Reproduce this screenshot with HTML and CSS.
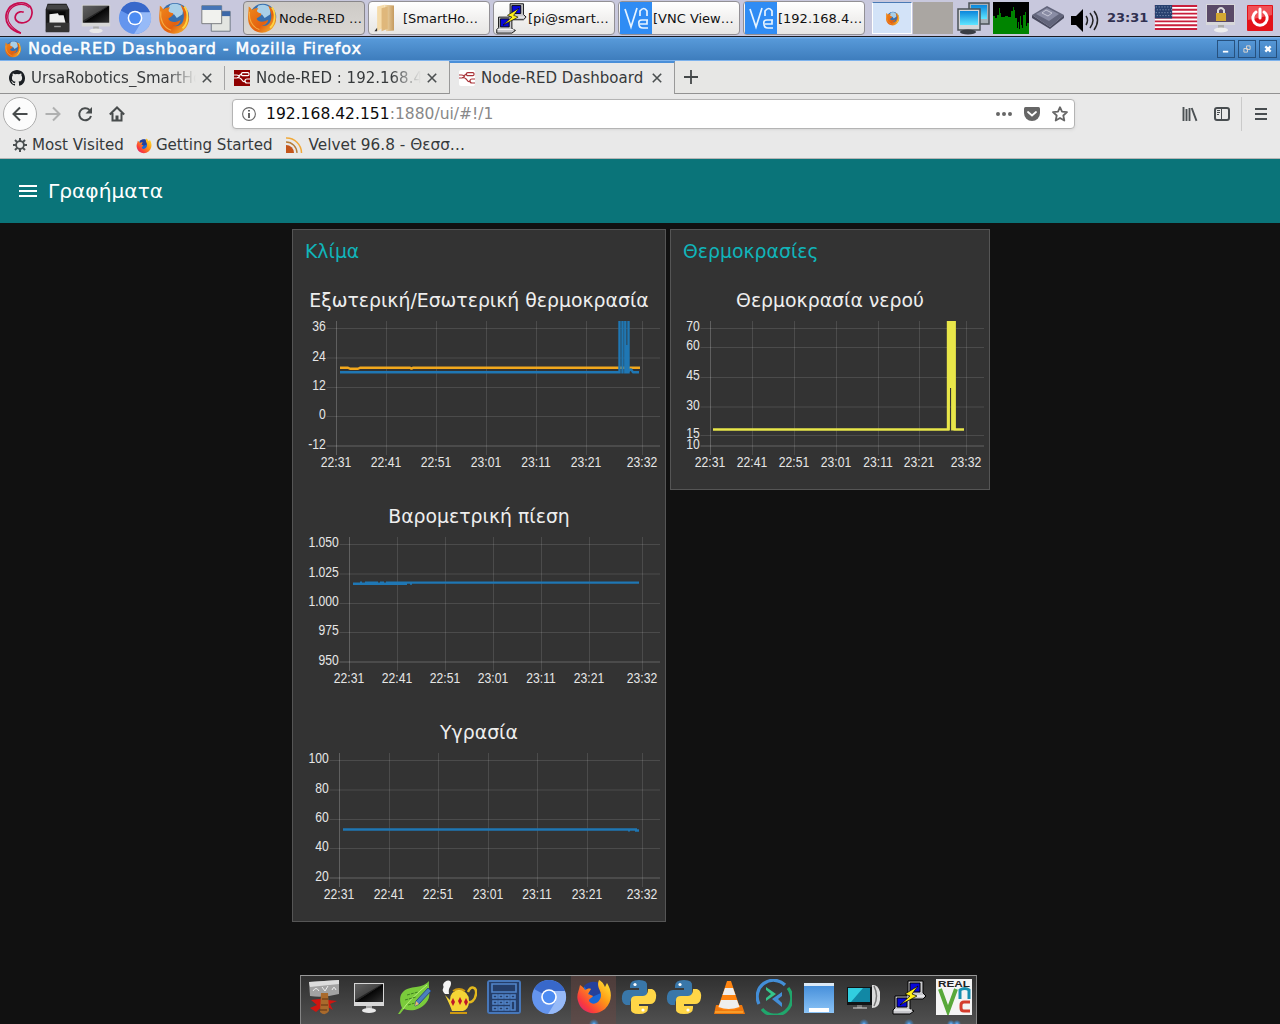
FILE: index.html
```html
<!DOCTYPE html>
<html lang="el">
<head>
<meta charset="utf-8">
<title>Node-RED Dashboard</title>
<link rel="stylesheet" href="styles.css">
</head>
<body>
<svg class="defs" width="0" height="0">
  <defs>
    <linearGradient id="fox" x1="0" y1="0" x2="1" y2="1"><stop offset="0" stop-color="#f08a1c"/><stop offset=".6" stop-color="#e3600f"/><stop offset="1" stop-color="#f8c838"/></linearGradient>
    <linearGradient id="quantum" x1="1" y1="0" x2="0" y2="1"><stop offset="0" stop-color="#fff03a"/><stop offset=".4" stop-color="#ff9a16"/><stop offset=".75" stop-color="#fa3c3c"/><stop offset="1" stop-color="#d0188a"/></linearGradient>
    <linearGradient id="screen" x1="0" y1="0" x2="1" y2="1"><stop offset="0" stop-color="#555"/><stop offset=".5" stop-color="#222"/><stop offset=".52" stop-color="#050505"/><stop offset="1" stop-color="#333"/></linearGradient>
    <linearGradient id="cyan" x1="0" y1="0" x2="0" y2="1"><stop offset="0" stop-color="#0a86dc"/><stop offset="1" stop-color="#5fe6ff"/></linearGradient>
    <linearGradient id="wood" x1="0" y1="0" x2="1" y2="0"><stop offset="0" stop-color="#f5dfb4"/><stop offset="1" stop-color="#c59a5e"/></linearGradient>
    <linearGradient id="window" x1="0" y1="0" x2="0" y2="1"><stop offset="0" stop-color="#3f8ad8"/><stop offset="1" stop-color="#8cc4f6"/></linearGradient>
  </defs>
  <symbol id="i-debian" viewBox="0 0 36 36"><path d="M20 34C8 31 2 22 5 12C9 1 24-1 30 6C34 12 31 22 23 23C16 24 12 19 15 14C17 11 21 11 23 12" fill="none" stroke="#c70a4e" stroke-width="1.800"/><path d="M20 34C9 28 4 20 7 12C11 3 23 1 29 7" fill="none" stroke="#c70a4e" stroke-width="1.400"/></symbol>
  <symbol id="i-cabinet" viewBox="0 0 36 36"><path d="M8 3h20l3 6v23H6V9z" fill="#1b1b1b"/><path d="M8 4h20l2 5H7z" fill="#444"/><path d="M9 11h18v11H9z" fill="#090909"/><path d="M10 14l9-1 1 2h5l2 8H10z" fill="#eee"/><path d="M7 23h24v10H6z" fill="#333"/><path d="M15 27h7" stroke="#999" stroke-width="1.5"/></symbol>
  <symbol id="i-monitor" viewBox="0 0 36 36"><path d="M3 4h30v23H3z" fill="#d7d7d7"/><path d="M4 5h28v18H4z" fill="url(#screen)"/><path d="M4 5h27L4 21z" fill="#777" opacity=".4"/><path d="M15 27h6v4h-6z" fill="#aaa"/><ellipse cx="18" cy="31.5" rx="7" ry="2.5" fill="#e9e9e9"/></symbol>
  <symbol id="i-chromium" viewBox="0 0 36 36"><circle cx="18" cy="18" r="17" fill="#6495ee"/><path d="M18 18L3 10A17 17 0 0 1 34 12z" fill="#3868ca"/><path d="M34 12A17 17 0 0 1 17 35l8-13-7-10z" fill="#96baf8"/><circle cx="18" cy="18" r="7.8" fill="#fff"/><circle cx="18" cy="18" r="6.2" fill="#4c8bf2"/></symbol>
  <symbol id="i-firefox" viewBox="0 0 36 36"><circle cx="19" cy="17" r="15" fill="#376fae"/><path d="M14 4c5-2 10-1 14 3l-1 7-6 4-3-4-6 2-3-4z" fill="#a8cfe8"/><path d="M3 5c2 1 3 3 4 4 2-2 4-2 7-2-3 3-2 5 3 6 1 3-4 4-5 6 2 4 8 4 13 1-1 6-7 7-9 6 9 3 14-4 12-14l-3-8c8 5 11 15 7 22C26 38 9 37 4 26 1 19 3 13 3 5z" fill="url(#fox)"/><path d="M29 6c5 6 4 18-2 23" fill="none" stroke="#ffd341" stroke-width="2"/><path d="M4 11c-1 8 2 17 11 20" fill="none" stroke="#f7ac42" stroke-width="1.2"/></symbol>
  <symbol id="i-quantum" viewBox="0 0 36 36"><circle cx="18" cy="18" r="14" fill="#1868d8"/><path d="M8 7c6-6 14-5 19 0l-2 7-9 4z" fill="#24409b"/><path d="M4 6c2 1 4 3 5 5 2-1 4-2 6-1l-3 5 5 2c-1 2-4 2-4 5 4 6 12 1 12-6 0-5-5-8-2-15 4 2 5 5 6 7l2-4c5 8 6 18-2 26-10 8-24 4-27-8C0 16 3 12 4 6z" fill="url(#quantum)"/></symbol>
  <symbol id="i-windows" viewBox="0 0 36 36"><path d="M13 11h20v21H13z" fill="#e3e5e1" stroke="#6d7784"/><path d="M13 11h20v5H13z" fill="#3c68a8"/><path d="M3 5h21v19H3z" fill="#f1f2ee" stroke="#77797c"/><path d="M3 5h21v4.500H3z" fill="#4675b5"/></symbol>
  <symbol id="i-folder" viewBox="0 0 36 36"><path d="M8 5l8-2v25l-8 5z" fill="#f5dbaa"/><path d="M16 3l11 1v28l-9 1z" fill="url(#wood)"/><path d="M13 7l7-2v25l-7 3z" fill="#dfb77b"/><path d="M5 33l3-4v4z" fill="#333"/></symbol>
  <symbol id="i-putty" viewBox="0 0 36 36"><path d="M17 2h15v12l3 3-3 3H17l-2-2 2-3z" fill="#c8c8cc" stroke="#000"/><path d="M19 4h10v9H19z" fill="#0808d8" stroke="#000"/><path d="M4 17h15v13l4 2-4 3H2v-4l2-2z" fill="#c8c8cc" stroke="#000"/><path d="M6 19h10v9H6z" fill="#0808d8" stroke="#000"/><path d="M16 17h17M3 31h18" stroke="#fff"/><path d="M27 7L14 15l5 2-10 9 17-9-5-2z" fill="#ffef19" stroke="#000" stroke-width=".7"/></symbol>
  <symbol id="i-vnc" viewBox="0 0 32 32"><path d="M0 0h32v32H0z" fill="#2f8cf4"/><path d="M5 7l6 18 6-19M20 14V9q4-5 7 0v5M28 18h-6q-4 0-3 4 0 4 4 4h5M20 22h7v-4" fill="none" stroke="#e7f4ff" stroke-width="1.7"/></symbol>
  <symbol id="i-screens" viewBox="0 0 36 36"><path d="M14 3h20v21H14z" fill="#a9b0b7" stroke="#4b5157" stroke-width="1.500"/><path d="M16 5h16v14H16z" fill="url(#cyan)"/><path d="M3 9h22v21H3z" fill="#d3d6d9" stroke="#4b5157" stroke-width="1.500"/><path d="M5 11h18v14H5z" fill="url(#cyan)"/><ellipse cx="13" cy="32" rx="8" ry="2.500" fill="#3a3e44"/></symbol>
  <symbol id="i-chip" viewBox="0 0 32 32"><path d="M0 13l15-9 17 9-14 12z" fill="#62657b"/><path d="M4 12l11-6 12 6-10 7z" fill="#898ca4"/><path d="M10 11l6 3 4-3-6-3z" fill="none" stroke="#c6c7d6"/><path d="M0 13v3l18 11 14-11v-3L18 25z" fill="#484a5e"/></symbol>
  <symbol id="i-sound" viewBox="0 0 30 28"><path d="M1 10h5l7-7v23l-7-7H1z" fill="#000"/><path d="M16 10q3 4 0 9M20 7q6 7 0 15M24 5q7 9 0 19" fill="none" stroke="#222" stroke-width="1.500"/></symbol>
  <symbol id="i-github" viewBox="0 0 16 16"><path fill="#1b1f23" d="M8 0C3.58 0 0 3.580 0 8c0 3.540 2.290 6.530 5.470 7.590.4.070.55-.17.55-.38v-1.340c-2.010.37-2.530-.49-2.690-.94-.09-.23-.48-.94-.82-1.130-.28-.15-.68-.52-.01-.53.63-.01 1.080.58 1.230.82.72 1.210 1.870.87 2.330.66.07-.52.28-.87.51-1.070-1.780-.2-3.640-.89-3.640-3.950 0-.87.31-1.590.82-2.150-.08-.2-.36-1.020.08-2.120 0 0 .67-.21 2.200.82a7.600 7.600 0 0 1 4 0c1.530-1.040 2.200-.82 2.200-.82.44 1.100.16 1.920.08 2.120.51.56.82 1.270.82 2.150 0 3.070-1.870 3.750-3.650 3.950.29.25.54.73.54 1.480v2.190c0 .21.15.46.55.38A8 8 0 0 0 16 8c0-4.420-3.580-8-8-8z"/></symbol>
  <symbol id="i-nodes" viewBox="0 0 16 16"><g fill="none" stroke="currentColor" stroke-width="1.200"><rect x="7.500" y="2.600" width="7.500" height="3" rx="1.200"/><path d="M0 5h2.500q1.500 0 2.500 1M0 8h3q2 0 2.500-2t2-2M3 7.500q3.500 0 5 2.500t3 1"/><path d="M16 9h-3q-2 0-2 2t2 2h3"/></g></symbol>
  <symbol id="i-close" viewBox="0 0 10 10"><path d="M.8.8l8.400 8.400M9.200.8L.8 9.200" fill="none" stroke="#4b4f50" stroke-width="1.600"/></symbol>
  <symbol id="i-python" viewBox="0 0 36 36"><path d="M9 7q0-6 9-6t8 6v8q0 4-5 4h-7q-5 0-5 7H5q-5-2-4-9 1-6 6-6h11V9H9z" fill="#3977a9"/><path d="M27 29q0 6-9 6t-8-6v-8q0-4 5-4h7q5 0 5-7h4q5 2 4 9-1 6-6 6H18v2h9z" fill="#ffd647"/><circle cx="14" cy="5.500" r="1.600" fill="#fff"/><circle cx="22" cy="31" r="1.600" fill="#fff"/></symbol>
</svg>

<header class="panel">
  <nav class="launchers">
    <svg class="menu"><use href="#i-debian"/></svg><svg><use href="#i-cabinet"/></svg><svg><use href="#i-monitor"/></svg><svg><use href="#i-chromium"/></svg><svg><use href="#i-firefox"/></svg><svg class="wide"><use href="#i-windows"/></svg>
  </nav>
  <div class="tasks">
    <div class="task active"><svg><use href="#i-firefox"/></svg><span>Node-RED …</span></div>
    <div class="task"><svg><use href="#i-folder"/></svg><span>[SmartHo…</span></div>
    <div class="task"><svg><use href="#i-putty"/></svg><span>[pi@smart…</span></div>
    <div class="task"><svg><use href="#i-vnc"/></svg><span>[VNC View…</span></div>
    <div class="task"><svg><use href="#i-vnc"/></svg><span>[192.168.4…</span></div>
  </div>
  <div class="pager"><div class="desk current"><svg width="15" height="15"><use href="#i-firefox"/></svg></div><div class="desk"></div></div>
  <div class="tray">
    <svg width="36" height="36"><use href="#i-screens"/></svg>
    <svg class="cpu" width="36" height="32" viewBox="0 0 36 32"><path d="M0 0h36v32H0z" fill="#000"/><path d="M0 32V14h2v2h2v-3h2V6h1v5h1v4h4v-1h3v1h3V9h2V5h1v3h1v8h2v10h1v-6h1v7h1V14h1v9h1v3h1V13h2v-3h1v14h1v-3h2v11z" fill="#008400"/></svg>
    <svg class="chip" width="32" height="32"><use href="#i-chip"/></svg>
    <svg class="sound" width="30" height="28"><use href="#i-sound"/></svg>
    <span class="clock">23:31</span>
    <svg class="flag" width="44" height="25" viewBox="0 0 44 26"><path d="M0 0h44v26H0z" fill="#fff"/><path d="M0 1h44M0 5h44M0 9h44M0 13h44M0 17h44M0 21h44M0 25h44" stroke="#c91f3c" stroke-width="2"/><path d="M0 0h18v14H0z" fill="#27406f"/><path d="M1 2h17M2 5h16M1 8h17M2 11h16" stroke="#9aabc9" stroke-dasharray="1 2"/></svg>
    <svg class="lock" width="30" height="32" viewBox="0 0 30 32"><path d="M0 2h29v21H0z" fill="#d7d7da"/><path d="M1 3h27v17H1z" fill="#594967"/><path d="M12 11V8q3-4 6 0v3" fill="none" stroke="#ddd" stroke-width="2"/><path d="M10 11h10v8H10z" fill="#d4a832"/><path d="M12 23h6v4h-6z" fill="#aaa"/><ellipse cx="15" cy="28" rx="7" ry="2.500" fill="#eee"/></svg>
    <svg class="power" width="26" height="26" viewBox="0 0 26 26"><rect width="26" height="26" rx="1" fill="#e31219"/><path d="M1 1h24v9L1 15z" fill="#f05055"/><path d="M9 7a7.200 7.200 0 1 0 8 0M13 4v9" fill="none" stroke="#fff" stroke-width="3" stroke-linecap="round"/></svg>
  </div>
</header>

<div class="titlebar">
  <svg width="18" height="18"><use href="#i-firefox"/></svg><span>Node-RED Dashboard - Mozilla Firefox</span>
  <div class="winbuttons">
    <svg viewBox="0 0 18 18"><path d="M5.500 12h6" stroke="#fff" stroke-width="2"/></svg>
    <svg viewBox="0 0 18 18"><path d="M8.500 5.500h4v4h-4zM5.500 8.500h4v4h-4z" fill="none" stroke="#e9ddd0"/></svg>
    <svg viewBox="0 0 18 18"><path d="M6 6l6 6M12 6l-6 6" stroke="#fff" stroke-width="2.600"/></svg>
  </div>
</div>

<div class="tabs">
  <div class="tab"><svg class="fav"><use href="#i-github"/></svg><span class="fade">UrsaRobotics_SmartHome</span><svg class="x"><use href="#i-close"/></svg></div>
  <div class="tab second"><svg class="fav red"><use href="#i-nodes"/></svg><span class="fade">Node-RED : 192.168.42</span><svg class="x"><use href="#i-close"/></svg></div>
  <div class="tab selected"><svg class="fav white"><use href="#i-nodes"/></svg><span>Node-RED Dashboard</span><svg class="x"><use href="#i-close"/></svg></div>
  <div class="newtab"><svg width="14" height="14" viewBox="0 0 14 14"><path d="M7 0v14M0 7h14" stroke="#444849" stroke-width="1.800"/></svg></div>
</div>

<div class="toolbar">
  <div class="back"><svg width="16" height="16" viewBox="0 0 16 16"><path d="M15.500 8H1.500M8 1.500L1.500 8 8 14.500" fill="none" stroke="#484c4d" stroke-width="2"/></svg></div>
  <svg class="fwd" width="16" height="16" viewBox="0 0 16 16"><path d="M.5 8h14M8 1.500L14.500 8 8 14.500" fill="none" stroke="#afb0b0" stroke-width="2"/></svg>
  <svg class="reload" width="16" height="16" viewBox="0 0 16 16"><path d="M12.500 4A6 6 0 1 0 14 10" fill="none" stroke="#484c4d" stroke-width="2"/><path d="M15 1v6.500H8.500z" fill="#484c4d"/></svg>
  <svg class="home" width="16" height="16" viewBox="0 0 16 16"><path d="M.8 8.500L8 1.500l7.200 7M3.500 7v7.500h9V7" fill="none" stroke="#484c4d" stroke-width="2"/><path d="M6.500 9.500h3v5h-3z" fill="#484c4d"/></svg>
  <div class="url">
    <svg width="14" height="14" viewBox="0 0 14 14"><circle cx="7" cy="7" r="6.400" fill="none" stroke="#666" stroke-width="1.100"/><path d="M7 6v5M7 3v1.600" stroke="#555" stroke-width="1.800"/></svg>
    <span class="address"><b>192.168.42.151</b>:1880/ui/#!/1</span>
    <svg width="16" height="16" viewBox="0 0 16 16"><path d="M0 8a2 2 0 1 0 4 0 2 2 0 1 0-4 0M6 8a2 2 0 1 0 4 0 2 2 0 1 0-4 0M12 8a2 2 0 1 0 4 0 2 2 0 1 0-4 0" fill="#666"/></svg>
    <svg class="pocket" width="16" height="16" viewBox="0 0 16 16"><path d="M1.500 1h13Q16 1 16 2.500V7A8 8 0 0 1 0 7V2.500Q0 1 1.500 1z" fill="#666"/><path d="M4 6l4 3.500L12 6" fill="none" stroke="#fff" stroke-width="1.800" stroke-linecap="round"/></svg>
    <svg width="16" height="16" viewBox="0 0 16 16"><path d="M8 1.200l2 4.500 5 .5-3.700 3.300 1 5L8 12l-4.300 2.500 1-5L1 6.200l5-.5z" fill="none" stroke="#666" stroke-width="1.800" stroke-linejoin="round"/></svg>
  </div>
  <div class="right-tools">
    <svg width="16" height="16" viewBox="0 0 16 16"><path d="M1.500 1v14M4.500 3v12M7.500 2v13M9.700 2l4.800 12.800" stroke="#4c5154" stroke-width="1.900"/></svg>
    <svg width="16" height="16" viewBox="0 0 16 16"><rect x="1" y="2" width="14" height="12" rx="2" fill="none" stroke="#484d50" stroke-width="2"/><path d="M7.500 2v12M3 4.500h3M3 6.500h3M3 8.500h2" stroke="#484d50"/></svg>
  </div>
  <div class="appmenu"><svg width="12" height="12" viewBox="0 0 12 12"><path d="M0 1h12M0 6h12M0 11h12" stroke="#484d50" stroke-width="2"/></svg></div>
</div>
<div class="bookmarks">
  <svg class="gear" width="14" height="14" viewBox="0 0 14 14"><circle cx="7" cy="7" r="3.900" fill="none" stroke="#4b5052" stroke-width="1.800"/><path d="M7 0v3M7 11v3M0 7h3M11 7h3M2 2l2.100 2.100M9.900 9.900L12 12M12 2L9.900 4.100M4.100 9.900L2 12" stroke="#4b5052" stroke-width="2"/></svg><span>Most Visited</span>
  <svg class="mini" width="16" height="16"><use href="#i-quantum"/></svg><span>Getting Started</span>
  <svg class="feed" width="17" height="16" viewBox="0 0 17 16"><path d="M0 8a8 8 0 0 1 8 8H0z" fill="#c4551b"/><path d="M0 5a11 11 0 0 1 11 11" fill="none" stroke="#b57c38" stroke-width="1.300"/><path d="M0 1a15 15 0 0 1 15.500 15" fill="none" stroke="#f0a93a" stroke-width="1.500"/></svg><span class="velvet">Velvet 96.8 - Θεσσ…</span>
</div>

<div class="appbar"><svg width="18" height="12" viewBox="0 0 18 12"><path d="M0 1h18M0 6h18M0 11h18" stroke="#fff" stroke-width="2"/></svg><h1>Γραφήματα</h1></div>

<main class="dashboard">
  <section class="group climate">
    <h2>Κλίμα</h2>
    <div class="widget"><h3>Εξωτερική/Εσωτερική θερμοκρασία</h3><svg class="chart" id="temp" width="372" height="174" viewBox="293 315 372 174"></svg></div>
    <div class="widget"><h3>Βαρομετρική πίεση</h3><svg class="chart" id="pressure" width="372" height="174" viewBox="293 315 372 174"></svg></div>
    <div class="widget"><h3>Υγρασία</h3><svg class="chart" id="humidity" width="372" height="174" viewBox="293 315 372 174"></svg></div>
  </section>
  <section class="group water">
    <h2>Θερμοκρασίες</h2>
    <div class="widget"><h3>Θερμοκρασία νερού</h3><svg class="chart" id="water" width="318" height="174" viewBox="671 315 318 174"></svg></div>
  </section>
</main>

<footer class="dock">
  <div><svg viewBox="0 0 36 36"><path d="M3 3l30-2v14q-15 4-29 2z" fill="#a2a2a2"/><path d="M3 3l30-2v4l-29 3z" fill="#ddd"/><path d="M7 12q3-5 6 0M16 8l3 4 3-5M26 11q2-5 4 0" fill="none" stroke="#eee"/><path d="M13 20l-8 1 6 5-7 3 6 4 8-7 9 5-3-6 7-3z" fill="#cf1510"/><path d="M15 14h7l1 18q-4 6-9 1z" fill="#a96a2c"/><path d="M16 20h6M15 26h7M14 31h7" stroke="#5e3213"/></svg></div>
  <div><svg><use href="#i-monitor"/></svg></div>
  <div><svg viewBox="0 0 36 36"><path d="M2 35l4-6C0 13 10 9 20 8q9-1 13-6c-1 7 3 16-3 22-6 7-15 9-22 6l-4 5z" fill="#7acb3b"/><path d="M7 30Q14 20 31 6" fill="none" stroke="#b9ef7b"/><path d="M11 16l11-3M9 21l11-3M12 26l7-2" stroke="#418323" stroke-dasharray="3 1"/><path d="M32 9l3 3-12 13-4 2 1-5z" fill="#4b7fc0" stroke="#2c4e83"/><path d="M19 27l4-2-3-3z" fill="#e8bd72"/></svg></div>
  <div><svg viewBox="0 0 36 36"><path d="M4 15C-1 10 4 10 2 6c1-5 8-6 8-2 0 5-3 4-2 11z" fill="#f5f5f5"/><path d="M27 13c3-7 9-5 8 2s-5 9-9 8" fill="none" stroke="#e3b91d" stroke-width="2.500"/><path d="M4 16l5 5q0-9 9-10 10 1 10 11 0 8-6 10H11q-2-6-7-16z" fill="#f5d536"/><path d="M12 12q6-4 12 0M9 34h17" stroke="#ce9911" fill="#f7e05a" stroke-width="2"/><path d="M12 19l2 4-2 4-2-4zM19 18l2 4-2 4-2-4zM25 19l2 4-2 4-2-4z" fill="#be1628"/></svg></div>
  <div><svg viewBox="0 0 36 36"><rect x="1" y="1" width="34" height="34" rx="3" fill="#4777b9"/><path d="M3 3h30v30H3z" fill="#253e69"/><g fill="none" stroke="#5285ca" stroke-width="1.600"><path d="M6 5h24v8H6zM7 16h4v3H7zM13 16h4v3h-4zM19 16h4v3h-4zM25 16h4v3h-4zM7 22h4v3H7zM13 22h4v3h-4zM19 22h4v3h-4zM25 22h4v9h-4zM7 28h4v3H7zM13 28h4v3h-4zM19 28h4v3h-4z"/></g></svg></div>
  <div><svg><use href="#i-chromium"/></svg></div>
  <div class="running current"><svg><use href="#i-quantum"/></svg></div>
  <div><svg><use href="#i-python"/></svg></div>
  <div><svg><use href="#i-python"/></svg></div>
  <div><svg viewBox="0 0 36 36"><path d="M5 26h26l3 9H3z" fill="#ef780d"/><path d="M16 2h4l9 27q-11 5-22 0z" fill="#ff8410"/><path d="M14 9h8l2.500 7h-13zM10 21h16l2.500 7q-11 4-21 0z" fill="#eee"/><path d="M4 33h28" stroke="#ffc047"/></svg></div>
  <div><svg viewBox="0 0 36 36"><g fill="none" stroke-width="3.200"><path d="M3 25A16.300 16.300 0 0 1 29 6" stroke="#438ed7"/><path d="M32 9A16.300 16.300 0 0 1 6 30" stroke="#20a66c"/></g><path d="M10 8l10 7-10 7v-3l5-4-5-4z" fill="#34c58b"/><path d="M26 13l-10 7 10 8v-4l-4-4 4-3z" fill="#438ed7"/></svg></div>
  <div><svg viewBox="0 0 36 36"><path d="M3 4h30v30H3z" fill="url(#window)"/><path d="M3 4h30v3H3z" fill="#dceaf7"/><path d="M8 29h20v4H8z" fill="#fff"/></svg></div>
  <div class="running"><svg viewBox="0 0 36 36"><path d="M26 6q6-1 8 7v8q-1 8-8 8z" fill="#dcdcdc"/><path d="M28 7q5 10 0 20" fill="none" stroke="#777" stroke-width="1.500"/><path d="M1 8h25v18H1z" fill="#101315"/><path d="M2 9h22v14H2z" fill="#1188a5"/><path d="M2 9h15L5 23H2z" fill="#31cee0"/><path d="M11 26h5v3h-5z" fill="#777"/><path d="M7 29h14" stroke="#ddd"/></svg></div>
  <div class="running"><svg><use href="#i-putty"/></svg></div>
  <div class="running double"><svg viewBox="0 0 36 36"><path d="M0 0h36v36H0z" fill="#f4f4f4"/><text x="2" y="8" class="real" textLength="32" lengthAdjust="spacingAndGlyphs">REAL</text><path d="M4 10l8 22 8-22" fill="none" stroke="#58a83a" stroke-width="4"/><path d="M24 20v-9q5-3 9 0v9" fill="none" stroke="#178fb0" stroke-width="3"/><path d="M34 23h-6q-3 0-3 3v3q0 3 3 3h6" fill="none" stroke="#d43c2d" stroke-width="3"/></svg></div>
</footer>
<script src="charts.js"></script>
</body>
</html>
```
FILE: styles.css
```css
* { box-sizing: border-box; }
body { margin: 0; width: 1280px; height: 1024px; overflow: hidden; background: #111; font-family: "DejaVu Sans", sans-serif; display: flex; flex-direction: column; }
body > * { flex: none; }
svg { display: block; flex: none; }
.defs { position: absolute; }
h1, h2, h3 { margin: 0; font-weight: 400; }

.panel { height: 37px; background: #c8c8dd; border-bottom: 1px solid #1c1c22; display: flex; align-items: center; }
.launchers { display: flex; width: 243px; padding-left: 1px; gap: 3px; }
.launchers svg { width: 36px; height: 34px; }
.launchers .menu { margin-right: -1px; }
.launchers .wide { margin-left: 3px; }
.tasks { display: flex; gap: 3px; }
.task { width: 122px; height: 34px; border: 1px solid #929095; border-radius: 4px; background: linear-gradient(#fff, #f2f1f0 50%, #e7e6e4); display: flex; align-items: center; padding-left: 1px; font-size: 13px; color: #111; white-space: nowrap; }
.task.active { background: linear-gradient(#cdcac6, #dad7d3); border-color: #88868a; padding-left: 2px; }
.task svg { width: 32px; height: 32px; margin-right: 1px; }
.task.active span { margin-top: 1px; }
.pager { display: flex; margin-left: 7px; gap: 1px; }
.desk { width: 40px; height: 32px; background: #aaa6a2; display: flex; align-items: center; justify-content: center; }
.desk.current { background: #d3e3f8; border: 1px solid #fff; border-top-color: #4a7ab5; }
.tray { display: flex; align-items: center; margin-left: 2px; }
.cpu { margin-left: 2px; }
.chip { margin-left: 3px; }
.sound { margin: 3px 0 0 6px; }
.clock { margin-left: 7px; width: 47px; margin-top: -1px; font-size: 13px; font-weight: 700; color: #303050; }
.flag { margin-top: -1px; }
.lock { margin-left: 8px; }
.power { margin-left: 11px; }

.titlebar { height: 23px; background: linear-gradient(#82b7ee 0, #5799d8 2px, #3e7dbd); display: flex; align-items: center; padding-left: 4px; color: #fff; font-size: 16px; letter-spacing: .88px; -webkit-text-stroke: .5px #fff; }
.titlebar > span { margin-left: 6px; }
.winbuttons { display: flex; gap: 3px; margin-left: auto; padding-right: 3px; }
.winbuttons svg { width: 18px; height: 18px; border: 1px solid #27517e; }

.tabs { height: 34px; background: #e7e7e5; border-top: 1px solid #7db2ec; display: flex; font-size: 15px; color: #36393b; box-shadow: inset 0 -1px #929292; }
.tab { width: 224px; display: flex; align-items: center; padding-left: 9px; white-space: nowrap; }
.tab.second { width: 225px; padding-left: 10px; background: linear-gradient(#a5a5a5, #a5a5a5) 0 5px / 1px 24px no-repeat; }
.fav { width: 16px; height: 16px; margin-right: 6px; }
.fav.red { background: #8f0000; color: #fff; }
.fav.white { background: #fff; color: #a93238; border-radius: 2px; }
.fade { width: 165px; overflow: hidden; -webkit-mask-image: linear-gradient(90deg, #000 82%, transparent 100%); mask-image: linear-gradient(90deg, #000 82%, transparent 100%); }
.x { width: 10px; height: 10px; margin-left: 6px; }
.tab.selected { width: 226px; background: #e9e9e9; border: 1px solid #999; border-top: 2px solid #4a8fd9; border-bottom: 0; padding-bottom: 2px; }
.tab.selected span { width: 163px; }
.tab.selected .x { margin-left: 8px; }
.newtab { display: flex; align-items: center; margin-left: 9px; padding-bottom: 1px; }

.toolbar { height: 39px; background: #e9e9e9; display: flex; align-items: center; padding-left: 3px; }
.back { width: 34px; height: 34px; border: 1px solid #adadad; border-radius: 50%; background: #fcfcfc; display: flex; align-items: center; justify-content: center; margin-top: 1px; }
.fwd { margin-left: 8px; }
.reload { margin-left: 16px; }
.home { margin-left: 16px; }
.url { width: 843px; height: 30px; margin: 0 0 0 107px; border: 1px solid #b4b4b4; border-radius: 4px; background: #fff; box-shadow: 0 1px 3px #d6d6d6; display: flex; align-items: center; padding: 0 6px 0 9px; }
.address { flex: 1; margin-left: 10px; font-size: 15.55px; color: #888; }
.address b { font-weight: 400; color: #0c0c0d; }
.pocket { margin: 0 12px; }
.right-tools { display: flex; gap: 16px; margin-left: 107px; }
.appmenu { height: 34px; margin-left: 11px; padding-left: 13px; border-left: 1px solid #cacaca; display: flex; align-items: center; }
.bookmarks { height: 26px; background: #e9e9e9; border-bottom: 1px solid #b5b5b5; display: flex; align-items: center; padding-left: 13px; font-size: 15.1px; color: #36393b; white-space: nowrap; padding-bottom: 1px; }
.gear { margin-right: 5px; }
.mini { margin: 1px 4px 0 12px; }
.feed { margin: 0 6px 0 13px; }
.velvet { font-size: 15.3px; }

.appbar { height: 64px; background: #0a7479; display: flex; align-items: center; padding-left: 19px; color: #fff; }
.appbar h1 { font-size: 20.2px; margin-left: 11px; }
.dashboard { height: 752px; display: flex; align-items: flex-start; gap: 4px; padding: 6px 0 0 292px; }
.group { background: #333; border: 1px solid #555; }
.climate { width: 374px; }
.water { width: 320px; }
.group h2 { height: 43px; line-height: 43px; padding-left: 12px; font-size: 18.85px; color: #10b5ba; }
.widget { height: 216px; }
.widget h3 { height: 42px; line-height: 26px; padding-top: 15px; text-align: center; font-size: 18.85px; color: #eee; white-space: nowrap; }
.chart text { font: 15px "Liberation Sans", sans-serif; fill: #e6e6e6; }
.grid { stroke: #fff; stroke-opacity: .12; fill: none; }
.grid.strong { stroke-opacity: .22; }
.grid.base { stroke-width: 2; }
.series { fill: none; stroke-width: 2.400; stroke-linejoin: bevel; }
.blue { stroke: #1f77b4; }
.orange { stroke: #f2a81d; }
.yellow { stroke: #e8e649; }

.dock { width: 677px; height: 49px; margin-left: 300px; border: 1px solid #858585; border-top: 1px solid #999; border-bottom: 0; background: linear-gradient(#303030, #505050); display: flex; }
.dock > div { width: 45px; padding: 3px 0 0 5px; }
.dock svg { width: 36px; height: 36px; }
.dock .current { background-color: #6a474380; }
.dock .running { background-image: radial-gradient(circle at 23px 48px, #72b9ff 0, #477eb0 2px, transparent 5px); }
.dock .double { background-image: radial-gradient(circle at 20px 48px, #72b9ff 0, #477eb0 2px, transparent 4px), radial-gradient(circle at 26px 48px, #72b9ff 0, #477eb0 2px, transparent 4px); }
.real { font: bold 8.5px "Liberation Sans", sans-serif; fill: #222; }
```
FILE: charts.js
```js
const times = ["22:31", "22:41", "22:51", "23:01", "23:11", "23:21", "23:32"];

const regular = [328.5, 358, 387.5, 416.5, 446];

const charts = {
  temp: {
    xs: [336.5, 386.5, 436.5, 486.5, 536.5, 586.5, 642.5], right: 660,
    ys: regular, labels: ["36", "24", "12", "0", "-12"],
    series: [
      ["orange", "M340 367.8H348L350 368.8H358L360 367.8H410L411.500 368.8L413 367.8H640"],
      ["blue", "M340 372.300H619M619.500 321V373.500M622.500 321V373.500M625.300 321V373.500M628.500 321V373.500M627 345V373.500M629 371L631 369L633 372.300H639"]
    ]
  },
  pressure: {
    xs: [349.5, 397.5, 445.5, 493.5, 541.5, 589.5, 642.5], right: 660,
    ys: regular, labels: ["1.050", "1.025", "1.000", "975", "950"],
    series: [["blue", "M353 367.800H407M410 367.600h2M360 366.600h2M365 366.600h13M380 366.600h4M386 366.600H639"]]
  },
  humidity: {
    xs: [339.5, 389.5, 438.5, 488.5, 537.5, 587.5, 642.5], right: 660,
    ys: regular, labels: ["100", "80", "60", "40", "20"],
    series: [["blue", "M343 397.500H637M628 398.300h2M635 398.500H639"]]
  },
  water: {
    xs: [710.5, 752.5, 794.5, 836.5, 878.5, 919.5, 966.5], right: 984,
    ys: [328.5, 347.5, 377.5, 407, 435.5, 446], labels: ["70", "60", "45", "30", "15", "10"],
    series: [["yellow", "M713 429.500H949M948 321V430.500M949 321L948.700 430.500M952.300 321V430.500M954.700 321V430.500M953.500 429.500H964M951 321V388"]]
  }
};

const label = (x, y, text, anchor) =>
  `<text transform="translate(${x} ${y}) scale(.81 1)" text-anchor="${anchor}">${text}</text>`;

for (const [id, c] of Object.entries(charts)) {
  const left = c.xs[0] - 10;
  let out = "";
  c.ys.forEach((y, i) => {
    const base = i === c.ys.length - 1 ? " base" : "";
    out += `<path class="grid${base}" d="M${left} ${y}H${c.right}"/>`;
    out += label(left - 0.7, Math.floor(y + 3), c.labels[i], "end");
  });
  c.xs.forEach((x, i) => {
    out += `<path class="grid${i ? "" : " strong"}" d="M${x} 321V455"/>`;
    out += label(x - 0.5, 467, times[i], "middle");
  });
  for (const [color, d] of c.series) out += `<path class="series ${color}" d="${d}"/>`;
  document.getElementById(id).innerHTML = out;
}
```
